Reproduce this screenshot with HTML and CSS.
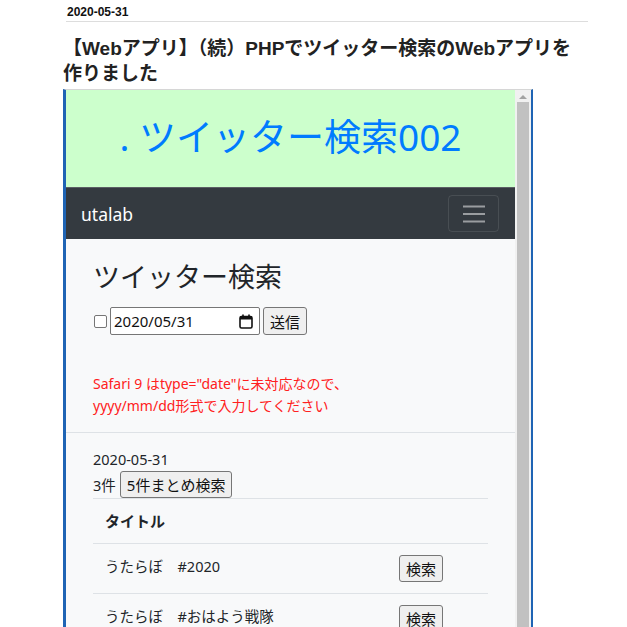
FILE: index.html
```html
<!DOCTYPE html>
<html lang="ja">
<head>
    <meta charset="UTF-8">
    <meta name="viewport" content="width=device-width, initial-scale=1.0">
    <title>【Webアプリ】（続）PHPでツイッター検索のWebアプリを作りました</title>
    <link rel="stylesheet" href="styles.css">
</head>
<body>
    <article class="post">
        <div class="post-date"><span>2020-05-31</span></div>
        <h1 class="post-title">【Webアプリ】（続）PHPでツイッター検索のWebアプリを<br>作りました</h1>

        <div class="frame">
            <div class="frame-view">
                <header class="banner">. ツイッター検索002</header>

                <nav class="navbar">
                    <span class="brand">utalab</span>
                    <button class="toggler" aria-label="menu">
                        <svg width="22" height="18" viewBox="0 0 22 18">
                            <path d="M0 1.5h22M0 9h22M0 16.5h22" stroke="rgba(255,255,255,0.5)" stroke-width="2"/>
                        </svg>
                    </button>
                </nav>

                <main class="app">
                    <section class="search">
                        <h2>ツイッター検索</h2>
                        <form class="search-form">
                            <span class="checkbox"></span>
                            <span class="date-input">
                                2020/05/31
                                <svg width="14" height="15" viewBox="0 0 14 15">
                                    <rect x="1" y="2.5" width="12" height="11.5" rx="1.5" fill="none" stroke="#111" stroke-width="1.6"/>
                                    <rect x="1" y="2.5" width="12" height="3" fill="#111"/>
                                    <path d="M4 0.5v3M10 0.5v3" stroke="#111" stroke-width="1.6"/>
                                </svg>
                            </span>
                            <button type="button" class="btn">送信</button>
                        </form>
                        <p class="note">Safari 9 はtype="date"に未対応なので、<br>yyyy/mm/dd形式で入力してください</p>
                    </section>

                    <section class="results">
                        <div class="result-date">2020-05-31</div>
                        <div class="result-count">3件 <button type="button" class="btn">5件まとめ検索</button></div>

                        <div class="table">
                            <div class="row head">
                                <div class="cell">タイトル</div>
                                <div class="cell"></div>
                            </div>
                            <div class="row">
                                <div class="cell">うたらぼ　#2020</div>
                                <div class="cell"><button type="button" class="btn">検索</button></div>
                            </div>
                            <div class="row">
                                <div class="cell">うたらぼ　#おはよう戦隊</div>
                                <div class="cell"><button type="button" class="btn">検索</button></div>
                            </div>
                        </div>
                    </section>
                </main>
            </div>

            <div class="scrollbar">
                <span class="arrow"></span>
                <span class="thumb"></span>
            </div>
        </div>
    </article>
</body>
</html>
```

FILE: styles.css
```css
* {
    margin: 0;
    padding: 0;
    box-sizing: border-box;
}

body {
    height: 627px;
    overflow: hidden;
    background: #fff;
    color: #222;
    font-family: 'Liberation Sans', 'Noto Sans CJK JP', sans-serif;
}

.post {
    width: 588px;
    padding: 5px 0 0 63px;
}

.post-date {
    margin-left: 3px;
    padding: 0 0 2px 1px;
    border-bottom: 1px solid #ddd;
    font-size: 12px;
    line-height: 14px;
    font-weight: bold;
    color: #111;
}

.post-title {
    margin: 14px 0 3px;
    font-size: 19px;
    line-height: 25px;
    font-weight: bold;
    color: #222;
}

/* embedded page */
.frame {
    display: flex;
    height: 600px;
    width: 470px;
    border-top: 1px solid #d6d6d6;
    border-left: 3px solid #1f64b4;
    border-right: 2px solid #1f64b4;
}

.frame-view {
    width: 449px;
    font-family: 'Noto Sans', 'Noto Sans CJK JP', sans-serif;
    color: #212529;
    background: #f8f9fa;
}

.banner {
    height: 97px;
    display: flex;
    align-items: center;
    justify-content: center;
    background: #ccffcc;
    color: #007bff;
    font-size: 37px;
    padding-bottom: 8px;
}

.navbar {
    height: 52px;
    display: flex;
    align-items: center;
    justify-content: space-between;
    padding: 0 16px 0 15px;
    background: #343a40;
    border-top: 1px solid #5a5f63;
}

.brand {
    color: #fff;
    font-size: 17.5px;
}

.toggler {
    width: 51px;
    height: 37px;
    display: flex;
    align-items: center;
    justify-content: center;
    background: transparent;
    border: 1px solid rgba(255, 255, 255, 0.1);
    border-radius: 4px;
}

.search {
    padding: 22px 27px 15px;
    border-bottom: 1px solid #dee2e6;
}

.search h2 {
    font-size: 27px;
    line-height: 32px;
    font-weight: normal;
}

.search-form {
    display: flex;
    align-items: center;
    gap: 3px;
    margin-top: 14px;
}

.checkbox {
    width: 13px;
    height: 13px;
    margin-left: 1px;
    border: 1px solid #767676;
    border-radius: 2px;
    background: #fff;
}

.date-input {
    width: 150px;
    height: 28px;
    display: flex;
    align-items: center;
    justify-content: space-between;
    padding: 0 6px 0 3px;
    background: #fff;
    border: 1px solid #767676;
    border-radius: 2px;
    font-size: 15px;
    color: #111;
}

.btn {
    height: 28px;
    padding: 0 6px;
    background: #efefef;
    border: 1px solid #767676;
    border-radius: 3px;
    font-family: 'Noto Sans', 'Noto Sans CJK JP', sans-serif;
    font-size: 15px;
    color: #111;
}

.note {
    margin-top: 38px;
    color: #ff2020;
    font-size: 14px;
    line-height: 22px;
}

.results {
    padding: 15px 27px;
    font-size: 14.5px;
}

.result-date {
    line-height: 22px;
}

.result-count {
    display: flex;
    align-items: center;
    gap: 4px;
    height: 28px;
}

.result-count .btn {
    height: 27px;
}

.table {
    border-top: 1px solid #dee2e6;
}

.row {
    display: grid;
    grid-template-columns: 1fr 101px;
}

.row + .row {
    border-top: 1px solid #dee2e6;
}

.cell {
    padding: 11px 12px;
    line-height: 22px;
}

.head .cell {
    font-weight: bold;
    font-size: 15px;
}

.cell .btn {
    height: 27px;
}

/* scrollbar of the embedded page */
.scrollbar {
    width: 16px;
    display: flex;
    flex-direction: column;
    align-items: center;
    background: #f1f1f1;
    padding: 5px 2px 0;
}

.arrow {
    width: 0;
    height: 0;
    border-left: 4px solid transparent;
    border-right: 4px solid transparent;
    border-bottom: 4px solid #a3a3a3;
}

.thumb {
    flex: 1;
    width: 100%;
    margin-top: 3px;
    background: #c1c1c1;
}
```
